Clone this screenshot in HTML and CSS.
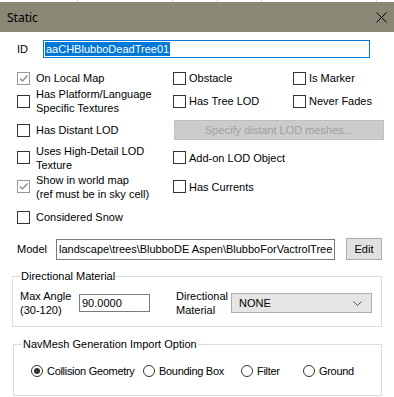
FILE: index.html
```html
<!DOCTYPE html>
<html lang="en">
<head>
  <meta charset="UTF-8" />
  <meta name="viewport" content="width=device-width, initial-scale=1.0" />
  <title>Static</title>
  <link rel="stylesheet" href="styles.css">
</head>
<body>
  <div class="strip"></div>
  <div class="titlebar">
    <span>Static</span>
    <span class="close">
      <svg width="11" height="11" viewBox="0 0 11 11"><path d="M0.5 0.5 L10.5 10.5 M10.5 0.5 L0.5 10.5" stroke="#000" stroke-width="1" fill="none"/></svg>
    </span>
  </div>

  <div class="id-row">
    <label>ID</label>
    <div class="id-box"><span class="sel">aaCHBlubboDeadTree01</span></div>
  </div>

  <div class="flags">
    <div class="check c1"><span class="box on"><svg width="11" height="11" viewBox="0 0 11 11"><path d="M2 5.5 L4.5 8 L9.5 2.5" stroke="#808080" stroke-width="1.2" fill="none"/></svg></span><span>On Local Map</span></div>
    <div class="check c2"><span class="box"></span><span>Obstacle</span></div>
    <div class="check c3"><span class="box"></span><span>Is Marker</span></div>

    <div class="check c1"><span class="box"></span><span>Has Platform/Language<br>Specific Textures</span></div>
    <div class="check c2"><span class="box"></span><span>Has Tree LOD</span></div>
    <div class="check c3"><span class="box"></span><span>Never Fades</span></div>

    <div class="check c1"><span class="box"></span><span>Has Distant LOD</span></div>
    <button class="lod-btn" disabled>Specify distant LOD meshes...</button>

    <div class="check c1"><span class="box"></span><span>Uses High-Detail LOD<br>Texture</span></div>
    <div class="check c2"><span class="box"></span><span>Add-on LOD Object</span></div>

    <div class="check c1"><span class="box on"><svg width="11" height="11" viewBox="0 0 11 11"><path d="M2 5.5 L4.5 8 L9.5 2.5" stroke="#808080" stroke-width="1.2" fill="none"/></svg></span><span>Show in world map<br>(ref must be in sky cell)</span></div>
    <div class="check c2"><span class="box"></span><span>Has Currents</span></div>

    <div class="check c1"><span class="box"></span><span>Considered Snow</span></div>
  </div>

  <div class="model-row">
    <label>Model</label>
    <div class="textbox model-box">landscape\trees\BlubboDE Aspen\BlubboForVactrolTree</div>
    <button class="edit-btn">Edit</button>
  </div>

  <fieldset class="group dir">
    <legend>Directional Material</legend>
    <div class="dir-row">
      <label class="angle-label">Max Angle<br>(30-120)</label>
      <div class="textbox angle-box">90.0000</div>
      <label class="mat-label">Directional<br>Material</label>
      <div class="select">
        <span>NONE</span>
        <svg width="9" height="5" viewBox="0 0 9 5"><path d="M0.5 0.5 L4.5 4.5 L8.5 0.5" stroke="#555" stroke-width="1" fill="none"/></svg>
      </div>
    </div>
  </fieldset>

  <fieldset class="group nav">
    <legend>NavMesh Generation Import Option</legend>
    <div class="radios">
      <div class="radio"><span class="dot on"></span><span>Collision Geometry</span></div>
      <div class="radio"><span class="dot"></span><span>Bounding Box</span></div>
      <div class="radio"><span class="dot"></span><span>Filter</span></div>
      <div class="radio"><span class="dot"></span><span>Ground</span></div>
    </div>
  </fieldset>
</body>
</html>
```

FILE: styles.css
```css
* { box-sizing: border-box; }
html, body {
  margin: 0; padding: 0;
  width: 394px; height: 397px; overflow: hidden;
  background: #fff; color: #000;
  font-family: "Liberation Sans", Arial, sans-serif; font-size: 11px;
}
.strip {
  height: 2px; background-color: #fff;
  background-image:
    linear-gradient(#d4d4d4, #d4d4d4), linear-gradient(#d4d4d4, #d4d4d4),
    linear-gradient(#d4d4d4, #d4d4d4), linear-gradient(#d4d4d4, #d4d4d4),
    linear-gradient(#d4d4d4, #d4d4d4);
  background-size: 1px 2px;
  background-repeat: no-repeat;
  background-position: 77px 0, 172px 0, 217px 0, 261px 0, 376px 0;
}
.titlebar {
  height: 30px; background: #898875;
  display: flex; align-items: center; justify-content: space-between;
  padding: 0 7px 0 7px;
  font-family: "Noto Sans", sans-serif; font-size: 12px;
}
.close { display: flex; }

.id-row { display: flex; align-items: center; margin-top: 8px; padding-left: 17px; }
.id-row label { width: 26px; }
.id-box {
  width: 327px; height: 18px; border: 1px solid #0078d7;
  padding: 0 1px; display: flex; align-items: center;
}
.sel { background: #0078d7; color: #fff; line-height: 14px; padding: 0 1px; }

.flags {
  display: grid; margin-top: 12px; padding-left: 17px;
  grid-template-columns: 156px 120px 1fr;
  grid-template-rows: 16px 30px 28px 27px 31px 30px;
  align-items: center;
}
.c1 { grid-column: 1; }
.c2 { grid-column: 2; }
.c3 { grid-column: 3; }
.check { display: flex; align-items: center; gap: 6px; line-height: 14px; }
.check.c2, .check.c3 { gap: 3px; }
.box {
  width: 13px; height: 13px; flex: none;
  border: 1px solid #333; background: #fff;
  display: flex; align-items: center; justify-content: center;
}
.box.on { border-color: #999; }
.lod-btn {
  grid-column: 2 / 4; width: 210px; height: 20px; margin-left: 1px;
  background: #ccc; border: 1px solid #bfbfbf; color: #a0a0a0;
  font: inherit; padding: 0;
}

.model-row { display: flex; align-items: center; margin-top: 6px; padding-left: 17px; }
.model-row label { width: 39px; }
.textbox {
  border: 1px solid #7a7a7a; background: #fff;
  white-space: nowrap; overflow: hidden;
  display: flex; align-items: center; padding-left: 2px;
}
.model-box { width: 279px; height: 21px; margin-right: 11px; }
.edit-btn {
  width: 36px; height: 22px; padding: 0;
  background: #e1e1e1; border: 1px solid #adadad;
  font: inherit; color: #000;
}

.group {
  border: 1px solid #dcdcdc; margin: 0; min-width: 0;
  line-height: 14px;
}
.group legend { padding: 0 1px; }
.dir { margin: 9px 0 0 12px; width: 370px; padding: 6px 7px 9px; }
.dir-row { display: flex; align-items: center; }
.angle-label { width: 59px; }
.angle-box { width: 71px; height: 18px; padding-left: 2px; }
.mat-label { width: 55px; margin-left: 26px; }
.select {
  width: 141px; height: 20px;
  background: #e5e5e5; border: 1px solid #adadad;
  display: flex; align-items: center; justify-content: space-between;
  padding: 0 9px 0 7px;
}

.nav { margin: 10px 0 0 13px; width: 369px; padding: 13px 0 17px 8px; }
.radios {
  display: grid; grid-template-columns: 112px 98px 62px auto;
  padding-left: 9px; letter-spacing: -0.3px;
}
.radio { display: flex; align-items: center; gap: 4px; }
.dot {
  width: 12px; height: 12px; flex: none;
  border: 1px solid #333; border-radius: 50%; background: #fff;
  display: flex; align-items: center; justify-content: center;
}
.dot.on::after {
  content: ""; width: 6px; height: 6px; border-radius: 50%; background: #333;
}
```
